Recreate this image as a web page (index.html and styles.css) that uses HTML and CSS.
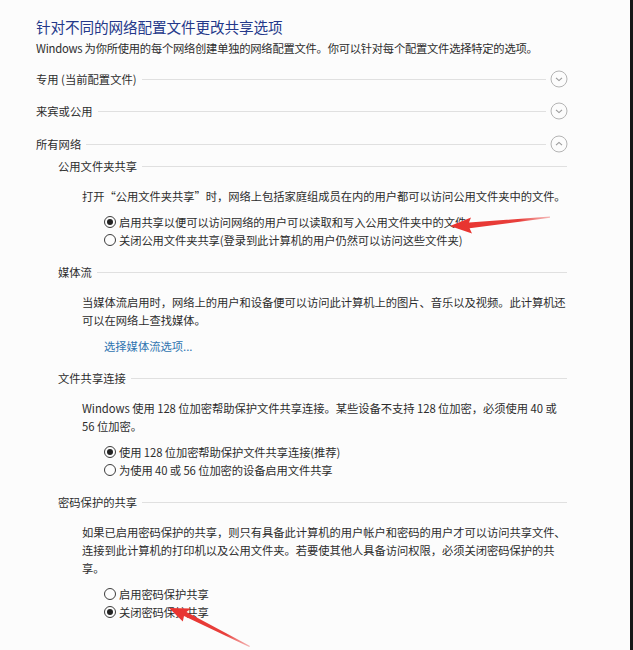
FILE: index.html
```html
<!DOCTYPE html>
<html lang="zh-CN">
<head>
<meta charset="utf-8">
<title>高级共享设置</title>
<link rel="stylesheet" href="styles.css">
</head>
<body>
<div class="page">
  <h1 class="title">针对不同的网络配置文件更改共享选项</h1>
  <p class="intro">Windows 为你所使用的每个网络创建单独的网络配置文件。你可以针对每个配置文件选择特定的选项。</p>

  <div class="group">
    <span class="group-label">专用 (当前配置文件)</span><span class="rule"></span>
    <span class="toggle"><svg viewBox="0 0 18 18" width="18" height="18"><circle cx="9" cy="9" r="8" fill="none" stroke="#b4b4b4" stroke-width="1"/><path d="M6 7.8 L9 10.6 L12 7.8" fill="none" stroke="#999" stroke-width="1.1"/></svg></span>
  </div>
  <div class="group g2">
    <span class="group-label">来宾或公用</span><span class="rule"></span>
    <span class="toggle"><svg viewBox="0 0 18 18" width="18" height="18"><circle cx="9" cy="9" r="8" fill="none" stroke="#b4b4b4" stroke-width="1"/><path d="M6 7.8 L9 10.6 L12 7.8" fill="none" stroke="#999" stroke-width="1.1"/></svg></span>
  </div>
  <div class="group g3">
    <span class="group-label">所有网络</span><span class="rule"></span>
    <span class="toggle"><svg viewBox="0 0 18 18" width="18" height="18"><circle cx="9" cy="9" r="8" fill="none" stroke="#b4b4b4" stroke-width="1"/><path d="M6 10.2 L9 7.4 L12 10.2" fill="none" stroke="#999" stroke-width="1.1"/></svg></span>
  </div>

  <section class="sub first">
    <div class="sub-head"><span>公用文件夹共享</span><span class="rule"></span></div>
    <p class="desc">打开“公用文件夹共享”时，网络上包括家庭组成员在内的用户都可以访问公用文件夹中的文件。</p>
    <div class="options">
      <div class="opt"><span class="radio on"></span>启用共享以便可以访问网络的用户可以读取和写入公用文件夹中的文件</div>
      <div class="opt"><span class="radio"></span>关闭公用文件夹共享(登录到此计算机的用户仍然可以访问这些文件夹)</div>
    </div>
  </section>

  <section class="sub">
    <div class="sub-head"><span>媒体流</span><span class="rule"></span></div>
    <p class="desc">当媒体流启用时，网络上的用户和设备便可以访问此计算机上的图片、音乐以及视频。此计算机还<br>可以在网络上查找媒体。</p>
    <a class="link">选择媒体流选项...</a>
  </section>

  <section class="sub">
    <div class="sub-head"><span>文件共享连接</span><span class="rule"></span></div>
    <p class="desc">Windows 使用 128 位加密帮助保护文件共享连接。某些设备不支持 128 位加密，必须使用 40 或<br>56 位加密。</p>
    <div class="options">
      <div class="opt"><span class="radio on"></span>使用 128 位加密帮助保护文件共享连接(推荐)</div>
      <div class="opt"><span class="radio"></span>为使用 40 或 56 位加密的设备启用文件共享</div>
    </div>
  </section>

  <section class="sub">
    <div class="sub-head"><span>密码保护的共享</span><span class="rule"></span></div>
    <p class="desc">如果已启用密码保护的共享，则只有具备此计算机的用户帐户和密码的用户才可以访问共享文件、<br>连接到此计算机的打印机以及公用文件夹。若要使其他人具备访问权限，必须关闭密码保护的共<br>享。</p>
    <div class="options">
      <div class="opt"><span class="radio"></span>启用密码保护共享</div>
      <div class="opt"><span class="radio on"></span>关闭密码保护共享</div>
    </div>
  </section>

  <svg class="arrows" width="633" height="650" viewBox="0 0 633 650">
    <defs>
      <linearGradient id="fade1" x1="450" y1="226" x2="550" y2="217" gradientUnits="userSpaceOnUse">
        <stop offset="0" stop-color="#e8322e"/>
        <stop offset="0.7" stop-color="#e8403c"/>
        <stop offset="1" stop-color="#f08a88" stop-opacity="0.6"/>
      </linearGradient>
      <linearGradient id="fade2" x1="168" y1="608" x2="250" y2="648" gradientUnits="userSpaceOnUse">
        <stop offset="0" stop-color="#e8322e"/>
        <stop offset="0.7" stop-color="#e8403c"/>
        <stop offset="1" stop-color="#f08a88" stop-opacity="0.6"/>
      </linearGradient>
    </defs>
    <path d="M450 226 L471 217.5 L469 222.6 L550 216.5 L550 217.8 L469.6 228.2 L472 233.6 Z" fill="url(#fade1)"/>
    <path d="M169 608 L191 608.5 L186.5 612 L250 646 L249.3 647 L184 616 L182.8 621.5 Z" fill="url(#fade2)"/>
  </svg>
</div>
</body>
</html>
```

FILE: styles.css
```css
html, body {
  margin: 0;
  padding: 0;
}

body {
  background: #fcfcfc;
  font-family: "Noto Sans CJK SC", "Noto Sans", sans-serif;
  color: #2c2c2c;
  font-size: 11.3px;
}

.page {
  position: relative;
  width: 633px;
  height: 650px;
  box-sizing: border-box;
  border-right: 3px solid #161616;
  padding: 16px 63px 0 36px;
  overflow: hidden;
}

.title {
  margin: 0;
  font-size: 14.6px;
  font-weight: 400;
  line-height: 22px;
  color: #24388a;
  letter-spacing: -0.1px;
}

.intro {
  margin: 1px 0 0;
  line-height: 18px;
  letter-spacing: -0.25px;
}

.group {
  display: flex;
  align-items: center;
  height: 18px;
  margin-top: 13px;
}

.g2 { margin-top: 14px; }
.g3 { margin-top: 15px; }

.group-label {
  white-space: nowrap;
  line-height: 18px;
}

.rule {
  flex: 1;
  height: 1px;
  background: #e0e0e0;
  margin-left: 5px;
}

.toggle {
  display: flex;
  margin-left: 4px;
  margin-right: -1px;
}

.sub {
  margin-left: 22px;
  margin-top: 14px;
}

.sub.first {
  margin-top: 4px;
}

.sub-head {
  display: flex;
  align-items: center;
  height: 18px;
  line-height: 18px;
  white-space: nowrap;
}

.desc {
  margin: 12px 0 0 24px;
  line-height: 18px;
  letter-spacing: -0.05px;
  white-space: nowrap;
}

.options {
  margin: 8px 0 0 46px;
  padding-left: 14px;
}

.opt {
  display: flex;
  align-items: center;
  height: 18px;
  line-height: 18px;
  white-space: nowrap;
  letter-spacing: -0.1px;
}

.radio {
  flex: none;
  width: 10px;
  height: 10px;
  border: 1px solid #3c3c3c;
  border-radius: 50%;
  margin-left: -14px;
  margin-right: 3px;
  position: relative;
  background: #fdfdfd;
}

.radio.on::after {
  content: "";
  position: absolute;
  left: 2px;
  top: 2px;
  width: 6px;
  height: 6px;
  border-radius: 50%;
  background: #222;
}

.link {
  display: block;
  margin: 8px 0 0 46px;
  line-height: 18px;
  color: #2f74b0;
}

.arrows {
  position: absolute;
  left: 0;
  top: 0;
  pointer-events: none;
}
```
